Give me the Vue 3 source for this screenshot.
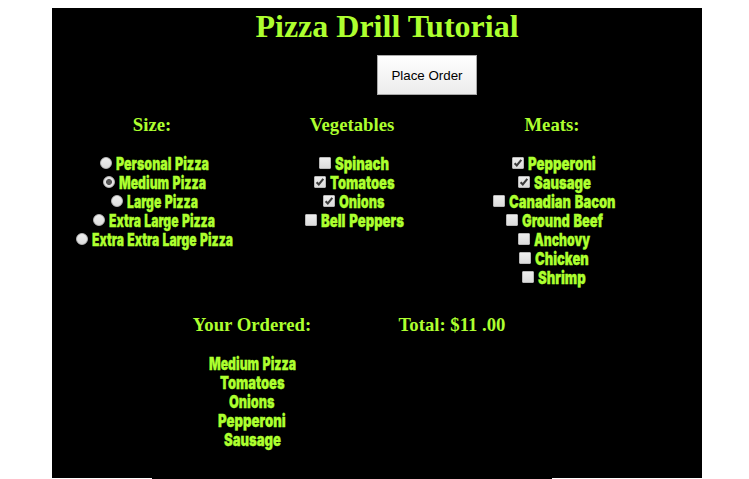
<script setup>
import { reactive, computed } from 'vue'

const groups = reactive([
  {
    title: 'Size:',
    type: 'radio',
    items: [
      { label: 'Personal Pizza', width: 93 },
      { label: 'Medium Pizza', width: 87, checked: true },
      { label: 'Large Pizza', width: 71 },
      { label: 'Extra Large Pizza', width: 106 },
      { label: 'Extra Extra Large Pizza', width: 141 },
    ],
  },
  {
    title: 'Vegetables',
    type: 'checkbox',
    items: [
      { label: 'Spinach', width: 54 },
      { label: 'Tomatoes', width: 64.5, checked: true },
      { label: 'Onions', width: 45.5, checked: true },
      { label: 'Bell Peppers', width: 83 },
    ],
  },
  {
    title: 'Meats:',
    type: 'checkbox',
    items: [
      { label: 'Pepperoni', width: 67.7, checked: true },
      { label: 'Sausage', width: 57, checked: true },
      { label: 'Canadian Bacon', width: 106.5 },
      { label: 'Ground Beef', width: 81 },
      { label: 'Anchovy', width: 56 },
      { label: 'Chicken', width: 53.7 },
      { label: 'Shrimp', width: 47.7 },
    ],
  },
])

const ordered = computed(() => groups.flatMap((g) => g.items.filter((i) => i.checked)))

function toggle(group, item) {
  if (group.type === 'radio') {
    group.items.forEach((i) => { i.checked = i === item })
  } else {
    item.checked = !item.checked
  }
}
</script>

<template>
  <main class="page">
    <h1>Pizza Drill Tutorial</h1>
    <button class="order">Place Order</button>
    <div class="columns">
      <section v-for="g in groups" :key="g.title" class="column">
        <h3>{{ g.title }}</h3>
        <div v-for="item in g.items" :key="item.label" class="row" @click="toggle(g, item)">
          <span class="control" :class="[g.type, { checked: item.checked }]">
            <svg v-if="g.type === 'checkbox' && item.checked" class="tick" viewBox="0 0 12 12">
              <path d="M2.6 6.2 4.8 8.4 9.3 2.9" />
            </svg>
          </span>
          <svg class="label" height="19" :width="item.width">
            <text x="0" y="16" :textLength="item.width" lengthAdjust="spacingAndGlyphs">{{ item.label }}</text>
          </svg>
        </div>
      </section>
    </div>
    <div class="summary">
      <section class="column">
        <h3>Your Ordered:</h3>
        <div v-for="item in ordered" :key="item.label" class="row">
          <svg class="label" height="19" :width="item.width">
            <text x="0" y="16" :textLength="item.width" lengthAdjust="spacingAndGlyphs">{{ item.label }}</text>
          </svg>
        </div>
      </section>
      <section class="column">
        <h3>Total: $11 .00</h3>
      </section>
    </div>
  </main>
</template>

<style>
body {
  background: #fff;
}
</style>

<style scoped>
.page {
  box-sizing: border-box;
  width: 650px;
  height: 471px;
  margin: 8px 0 0 52px;
  background: linear-gradient(#000, #000) 0 0 / 100% 470px no-repeat;
  color: #adff2f;
  font-family: "Liberation Serif", serif;
}
h1 {
  margin: 0;
  padding-left: 20px;
  height: 37px;
  font-size: 32px;
  line-height: 37px;
  text-align: center;
}
.order {
  display: block;
  box-sizing: border-box;
  width: 100px;
  height: 40px;
  margin: 10px 0 0 325px;
  padding: 0;
  border: 1px solid #a9a9a9;
  border-radius: 0;
  background: linear-gradient(#fff, #ececec);
  color: #000;
  font: 13.333px "Liberation Sans", sans-serif;
}
.columns {
  display: flex;
  height: 200px;
}
.summary {
  display: flex;
  width: 400px;
  height: 184px;
  margin-left: 100px;
  background: #000;
}
.column {
  width: 200px;
}
h3 {
  margin: 0 0 19px;
  padding-top: 19px;
  font-size: 18.72px;
  line-height: 21px;
  text-align: center;
}
.row {
  display: flex;
  justify-content: center;
  height: 19px;
}
.control {
  box-sizing: border-box;
  width: 12px;
  height: 12px;
  margin: 3px 4px 0 4.3px;
  border: 1px solid #b8b8b8;
  background: linear-gradient(#eee, #dcdcdc);
}
.checkbox {
  border-radius: 1px;
}
.radio {
  border-radius: 50%;
}
.radio.checked {
  background: radial-gradient(circle, #555 0 2.6px, #e6e6e6 3.3px);
}
.tick {
  display: block;
  width: 12px;
  height: 12px;
  margin: -1px;
  fill: none;
  stroke: #3c3c3c;
  stroke-width: 2.1;
}
.label {
  display: block;
  overflow: visible;
  fill: #adff2f;
  stroke: #adff2f;
  stroke-width: 0.3px;
  font-family: Inter, "Open Sans", sans-serif;
  font-size: 17.5px;
  font-weight: 900;
  word-spacing: 1.5px;
}
</style>
